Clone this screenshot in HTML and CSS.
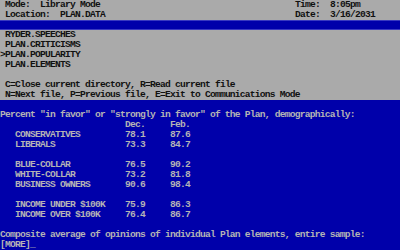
FILE: index.html
```html
<!DOCTYPE html>
<html>
<head>
<meta charset="utf-8">
<link rel="stylesheet" href="styles.css">
</head>
<body>
<div class="screen">
  <section class="panel">
    <div class="header">
      <div class="line">Mode:  Library Mode</div>
      <div class="line">Time:  8:05pm</div>
      <div class="line">Location:  PLAN.DATA</div>
      <div class="line">Date:  3/16/2031</div>
    </div>
    <div class="bar"></div>
    <ul class="files">
      <li class="line"> RYDER.SPEECHES</li>
      <li class="line"> PLAN.CRITICISMS</li>
      <li class="line">&gt;PLAN.POPULARITY</li>
      <li class="line"> PLAN.ELEMENTS</li>
    </ul>
    <div class="help">
      <div class="line">C=Close current directory, R=Read current file</div>
      <div class="line">N=Next file, P=Previous file, E=Exit to Communications Mode</div>
    </div>
  </section>
  <section class="reader">
    <div class="line">Percent "in favor" or "strongly in favor" of the Plan, demographically:</div>
    <div class="table">
      <div class="row"><span></span><span>Dec.</span><span>Feb.</span></div>
      <div class="row"><span>CONSERVATIVES</span><span>78.1</span><span>87.6</span></div>
      <div class="row"><span>LIBERALS</span><span>73.3</span><span>84.7</span></div>
      <div class="row gap"><span>BLUE-COLLAR</span><span>76.5</span><span>90.2</span></div>
      <div class="row"><span>WHITE-COLLAR</span><span>73.2</span><span>81.8</span></div>
      <div class="row"><span>BUSINESS OWNERS</span><span>90.6</span><span>98.4</span></div>
      <div class="row gap"><span>INCOME UNDER $100K</span><span>75.9</span><span>86.3</span></div>
      <div class="row"><span>INCOME OVER $100K</span><span>76.4</span><span>86.7</span></div>
    </div>
    <div class="line composite">Composite average of opinions of individual Plan elements, entire sample:</div>
    <div class="line">[MORE]<span class="cursor">_</span></div>
  </section>
</div>
</body>
</html>
```
FILE: styles.css
```css
html, body {
  margin: 0;
  padding: 0;
  background: #0000aa;
}
.screen {
  width: 400px;
  height: 250px;
  overflow: hidden;
  font-family: "Liberation Mono", "DejaVu Sans Mono", monospace;
  font-size: 9.6px;
  font-weight: bold;
  letter-spacing: -0.76px;
  line-height: 10px;
  display: flex;
  flex-direction: column;
}
.line {
  height: 10px;
  white-space: pre;
}
.panel {
  background: #aaaaaa;
  color: #111111;
  height: 100px;
  display: flex;
  flex-direction: column;
}
.header {
  display: grid;
  grid-template-columns: 290px auto;
  padding-left: 5px;
}
.bar {
  height: 8px;
  background: #0000aa;
  border-top: 1px solid #3a3ac0;
  border-bottom: 1px solid #3a3ac0;
}
.files {
  list-style: none;
  margin: 0;
  padding: 0;
}
.help {
  margin-top: 10px;
  padding-left: 5px;
}
.reader {
  flex: 1;
  background: #0000aa;
  color: #b4b4b4;
  padding-top: 10px;
}
.table {
  display: flex;
  flex-direction: column;
}
.row {
  display: grid;
  grid-template-columns: 110px 45px auto;
  padding-left: 15px;
  height: 10px;
  white-space: pre;
}
.row.gap {
  margin-top: 10px;
}
.composite {
  margin-top: 10px;
}
.cursor {
  color: #b4b4b4;
}
```
